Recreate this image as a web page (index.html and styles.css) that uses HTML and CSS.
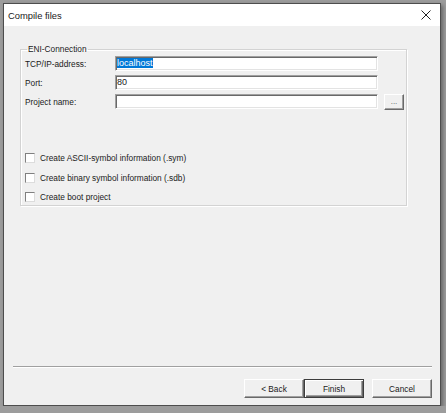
FILE: index.html
```html
<!DOCTYPE html>
<html lang="en">
<head>
  <meta charset="UTF-8">
  <title>Compile files</title>
  <link rel="stylesheet" href="styles.css">
</head>
<body>

  <div class="window">
    <div class="titlebar">
      <span class="title">Compile files</span>
      <svg class="close" width="10" height="10" viewBox="0 0 10 10">
        <path d="M0.5 0.5 L9.5 9.5 M9.5 0.5 L0.5 9.5" stroke="#222" stroke-width="1"/>
      </svg>
    </div>

    <div class="content">
      <fieldset class="group">
        <legend>ENI-Connection</legend>

        <div class="field-row">
          <label>TCP/IP-address:</label>
          <div class="edit"><span class="selected">localhost</span></div>
        </div>
        <div class="field-row">
          <label>Port:</label>
          <div class="edit">80</div>
        </div>
        <div class="field-row">
          <label>Project name:</label>
          <div class="edit"></div>
          <button class="browse">...</button>
        </div>

        <div class="checks">
          <div class="check-row"><span class="box"></span>Create ASCII-symbol information (.sym)</div>
          <div class="check-row"><span class="box"></span>Create binary symbol information (.sdb)</div>
          <div class="check-row"><span class="box"></span>Create boot project</div>
        </div>
      </fieldset>

      <div class="spacer"></div>

      <div class="separator"></div>

      <div class="buttons">
        <button class="btn">&lt; Back</button>
        <button class="btn default">Finish</button>
        <button class="btn cancel">Cancel</button>
      </div>
    </div>
  </div>

</body>
</html>
```

FILE: styles.css
```css
body {
  margin: 0;
  background: #9c9c9c;
  font-family: "Liberation Sans", Arial, sans-serif;
  font-size: 8.3px;
  color: #1a1a1a;
}

.window {
  margin: 3px 0 0 3px;
  width: 436px;
  height: 401px;
  border: 1px solid #4d4d4d;
  background: #f0f0f0;
  display: flex;
  flex-direction: column;
  box-shadow: 2px 2px 4px rgba(0,0,0,0.35);
}

.titlebar {
  height: 22px;
  background: #fff;
  display: flex;
  align-items: center;
  justify-content: space-between;
  padding: 0 8px 0 4px;
}

.title {
  font-size: 9.4px;
}

.close {
  margin-right: 1px;
}

.content {
  flex: 1;
  display: flex;
  flex-direction: column;
  padding: 0 8px 7px 9px;
}

.group {
  margin: 18px 0 0 7px;
  width: 387px;
  height: 162px;
  padding: 2px 0 0 4px;
  border: 1px solid #d3d3d3;
  box-shadow: 1px 1px 0 #fff, inset 1px 1px 0 #fff;
  box-sizing: border-box;
}

.group legend {
  padding: 0 1px;
  margin-left: 2px;
}

.field-row {
  display: flex;
  align-items: center;
  height: 15px;
  margin-bottom: 4px;
}

.field-row label {
  width: 90px;
}

.edit {
  width: 259px;
  height: 11px;
  line-height: 11px;
  background: #fff;
  border-top: 1px solid #a0a0a0;
  border-left: 1px solid #a0a0a0;
  border-right: 1px solid #fff;
  border-bottom: 1px solid #fff;
  box-shadow: inset 1px 1px 0 #696969, inset -1px -1px 0 #e3e3e3;
  padding: 1px;
  font-size: 9px;
}

.selected {
  background: #0078d7;
  color: #fff;
}

.browse {
  margin-left: 6px;
  width: 20px;
  height: 16px;
  padding: 0;
  font-family: inherit;
  font-size: 8px;
  color: #555;
  background: #f0f0f0;
  border-top: 1px solid #fff;
  border-left: 1px solid #fff;
  border-right: 1px solid #696969;
  border-bottom: 1px solid #696969;
  box-shadow: inset -1px -1px 0 #a0a0a0;
}

.checks {
  margin-top: 44px;
  display: flex;
  flex-direction: column;
  gap: 9.5px;
}

.check-row {
  display: flex;
  align-items: center;
  height: 10px;
}

.box {
  width: 8px;
  height: 8px;
  background: #fff;
  border-top: 1px solid #808080;
  border-left: 1px solid #808080;
  border-right: 1px solid #dcdcdc;
  border-bottom: 1px solid #dcdcdc;
  margin-right: 5px;
}

.spacer {
  flex: 1;
}

.separator {
  height: 1px;
  background: #a0a0a0;
  border-bottom: 1px solid #fff;
  margin: 0 0 11px 0;
}

.buttons {
  display: flex;
  justify-content: flex-end;
}

.btn {
  width: 60px;
  height: 19px;
  padding: 0;
  font-family: inherit;
  font-size: 8.3px;
  color: #1a1a1a;
  background: #f0f0f0;
  border-top: 1px solid #fff;
  border-left: 1px solid #fff;
  border-right: 1px solid #696969;
  border-bottom: 1px solid #696969;
  box-shadow: inset -1px -1px 0 #a0a0a0;
}

.btn.default {
  border: 1px solid #3c3c3c;
  box-shadow: inset 1px 1px 0 #fff, inset -1px -1px 0 #696969, inset -2px -2px 0 #a0a0a0;
}

.btn.cancel {
  margin-left: 8px;
}
```
